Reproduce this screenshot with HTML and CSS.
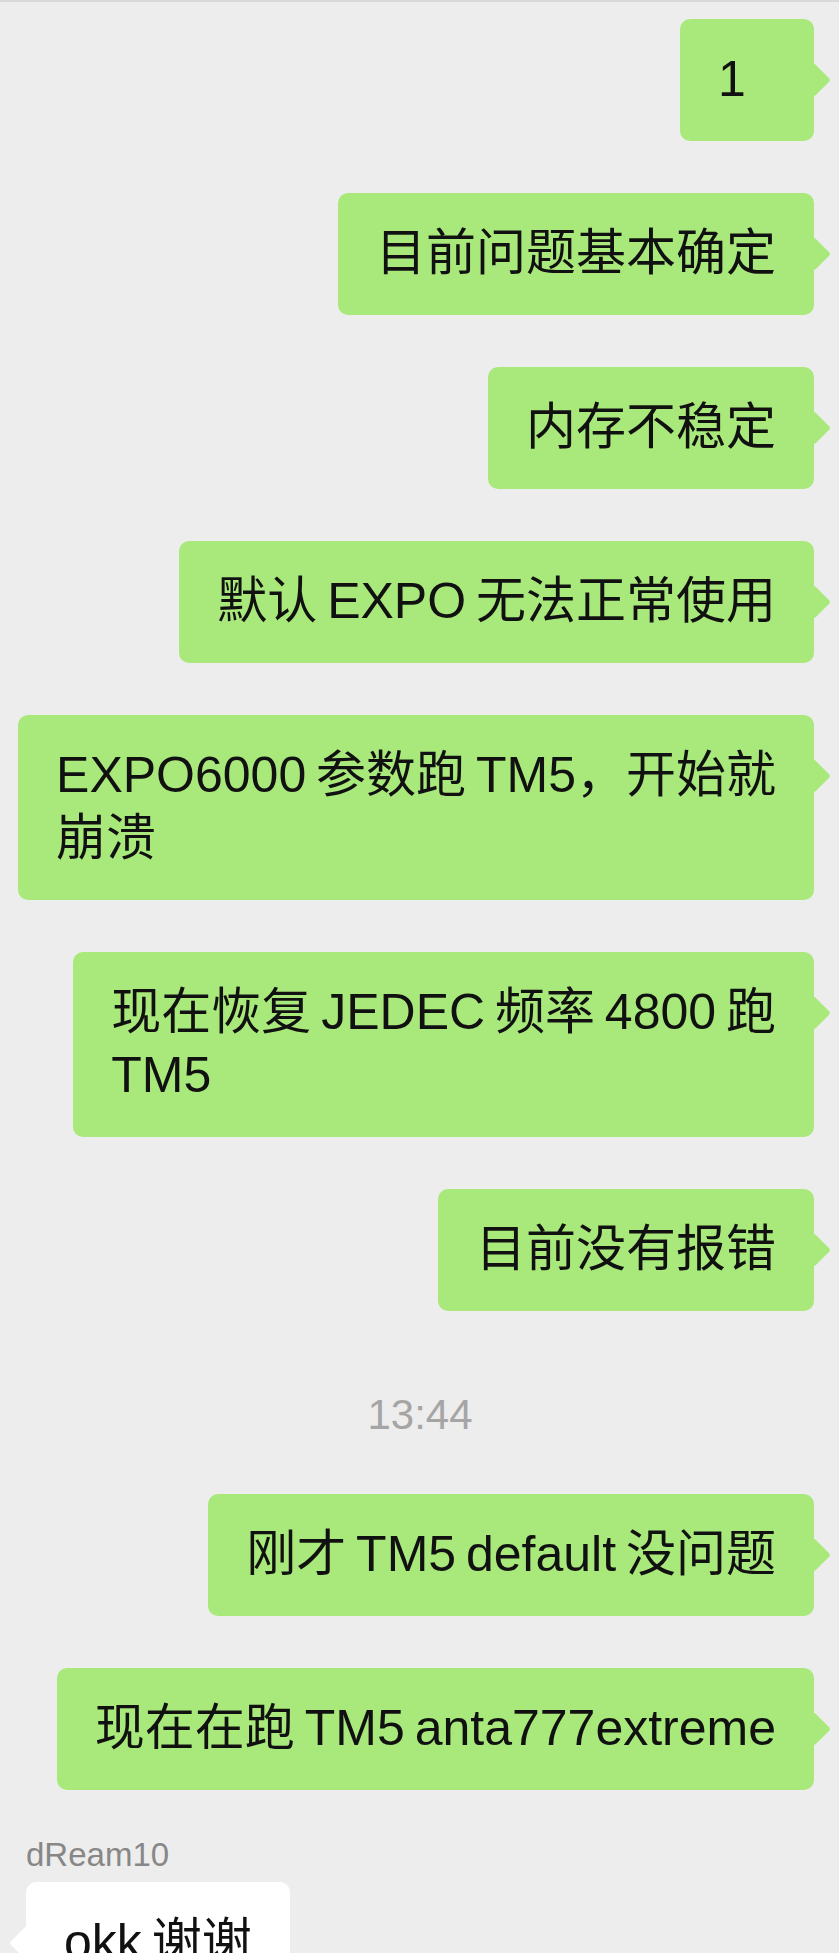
FILE: index.html
```html
<!DOCTYPE html>
<html>
<head>
  <meta charset="utf-8" />
  <title>聊天</title>
  <link rel="stylesheet" href="styles.css">
</head>
<body>

<div class="chat">

  <div class="msg mine"><div class="bubble">1</div></div>
  <div class="msg mine"><div class="bubble">目前问题基本确定</div></div>
  <div class="msg mine"><div class="bubble">内存不稳定</div></div>
  <div class="msg mine"><div class="bubble">默认 EXPO 无法正常使用</div></div>
  <div class="msg mine"><div class="bubble">EXPO6000 参数跑 TM5，开始就<br>崩溃</div></div>
  <div class="msg mine"><div class="bubble">现在恢复 JEDEC 频率 4800 跑<br>TM5</div></div>
  <div class="msg mine"><div class="bubble">目前没有报错</div></div>

  <div class="time">13:44</div>

  <div class="msg mine"><div class="bubble">刚才 TM5 default 没问题</div></div>
  <div class="msg mine"><div class="bubble">现在在跑 TM5 anta777extreme</div></div>

  <div class="msg theirs">
    <div class="name">dReam10</div>
    <div class="bubble">okk 谢谢</div>
  </div>

</div>

</body>
</html>
```

FILE: styles.css
```css
*{margin:0;padding:0;}
body{
  background:#ededed;
  font-family:"Liberation Sans","Noto Sans CJK SC",sans-serif;
  color:#111;
}
.chat{
  display:flex;
  flex-direction:column;
  gap:52px;
  height:100vh;
  box-sizing:border-box;
  overflow:hidden;
  padding:17px 25px 0 26px;
  border-top:2px solid #d9d9d9;
}
.msg{
  display:flex;
}
.mine{
  align-self:flex-end;
}
.theirs{
  align-self:flex-start;
  flex-direction:column;
  align-items:flex-start;
  gap:7px;
  margin-top:-7px;
}

/* 气泡 */
.bubble{
  position:relative;
  box-sizing:border-box;
  min-width:134px;
  padding:29px 38px 30px;
  border-radius:10px;
  background:#a9e97b;
  font-size:50px;
  line-height:63px;
  word-spacing:-4px;
  white-space:nowrap;
}
.bubble::after{
  content:'';
  position:absolute;
  top:49px;
  width:24px;
  height:24px;
  border-radius:3px;
  background:inherit;
  transform:rotate(45deg);
}
.mine .bubble::after{
  right:-12px;
}
.theirs .bubble{
  background:#fff;
}
.theirs .bubble::after{
  left:-12px;
}

.time{
  margin:27px 0 2px;
  text-align:center;
  font-size:42px;
  line-height:50px;
  color:#a5a5a5;
}
.name{
  font-size:33px;
  line-height:40px;
  color:#878787;
}
```
